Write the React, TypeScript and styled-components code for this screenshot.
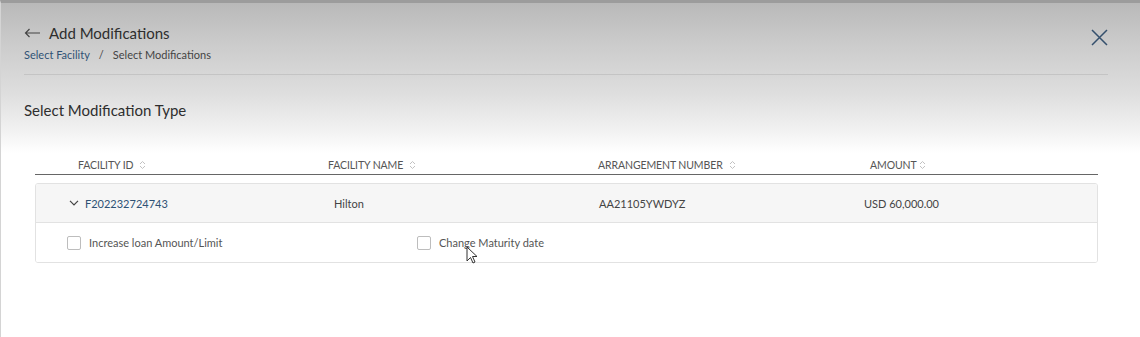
import React from "react";
import styled, { createGlobalStyle } from "styled-components";

const GlobalStyle = createGlobalStyle`
    html, body {
        margin: 0;
        padding: 0;
        background: #ffffff;
    }
    body {
        font-family: Lato, "Open Sans", "Liberation Sans", sans-serif;
        color: #333;
    }
`;

const Page = styled.div`
    position: relative;
    width: 1140px;
    height: 337px;
    box-sizing: border-box;
    border-top: 3px solid #9c9c9c;
    border-left: 1px solid #d4d4d4;
    background: linear-gradient(#b9b9b9 0px, #cbcbcb 40px, #dedede 90px, #f0f0f0 125px, #ffffff 150px);
    overflow: hidden;
`;

const Header = styled.div`
    padding: 20px 32px 0 23px;
    display: flex;
    justify-content: space-between;
    align-items: flex-start;
`;

const TitleBlock = styled.div`
    display: flex;
    flex-direction: column;
`;

const TitleRow = styled.div`
    display: flex;
    align-items: center;
    gap: 8px;
    height: 20px;
`;

const Title = styled.h1`
    margin: 0;
    font-size: 15px;
    font-weight: 400;
    color: #2e2e2e;
`;

const Crumbs = styled.div`
    display: flex;
    align-items: center;
    gap: 9px;
    margin-top: 5px;
    font-size: 11px;
    color: #444;
`;

const CrumbLink = styled.a`
    color: #2f5275;
    text-decoration: none;
`;

const CloseButton = styled.button`
    margin-top: 6px;
    border: none;
    background: none;
    padding: 0;
    width: 17px;
    height: 17px;
    cursor: pointer;
`;

const Divider = styled.hr`
    margin: 13px 32px 0 23px;
    border: none;
    border-top: 1px solid #c4c4c4;
`;

const SectionTitle = styled.h2`
    margin: 26px 0 0 23px;
    font-size: 15px;
    font-weight: 400;
    color: #2e2e2e;
`;

const Table = styled.div`
    margin: 40px 42px 0 34px;
`;

const HeadRow = styled.div`
    display: grid;
    grid-template-columns: 293px 270px 272px 1fr;
    height: 15px;
    align-items: start;
    border-bottom: 1px solid #666;
`;

const HeadCell = styled.div<{ $pad?: number; $tight?: boolean }>`
    padding-left: ${(p) => p.$pad ?? 0}px;
    display: flex;
    align-items: center;
    gap: ${(p) => (p.$tight ? 2 : 6)}px;
    font-size: 10.5px;
    color: #555;
    text-transform: uppercase;
    letter-spacing: -0.1px;
`;

const Card = styled.div`
    margin-top: 8px;
    border: 1px solid #e2e2e2;
    border-radius: 3px;
    overflow: hidden;
`;

const DataRow = styled.div`
    display: grid;
    grid-template-columns: 298px 265px 265px 1fr;
    align-items: center;
    height: 38px;
    background: #f6f6f6;
    border-bottom: 1px solid #e2e2e2;
    font-size: 11px;
    color: #444;
`;

const IdCell = styled.div`
    display: flex;
    align-items: center;
    gap: 6px;
    padding-left: 33px;
`;

const IdLink = styled.a`
    color: #2f5275;
    text-decoration: none;
`;

const Options = styled.div`
    display: grid;
    grid-template-columns: 350px 1fr;
    height: 39px;
    align-items: center;
    padding-left: 31px;
    background: #fff;
`;

const Option = styled.label`
    display: flex;
    align-items: center;
    gap: 8px;
    font-size: 11px;
    color: #555;
`;

const Box = styled.span`
    width: 12px;
    height: 12px;
    border: 1px solid #bdbdbd;
    border-radius: 2px;
    background: #fff;
`;

const Cursor = styled.svg`
    position: absolute;
    left: 465px;
    top: 243px;
`;

const SortIcon = () => (
    <svg width="7" height="10" viewBox="0 0 7 10">
        <path d="M1 4 L3.5 1.5 L6 4 M1 6 L3.5 8.5 L6 6" stroke="#c2c2c2" strokeWidth="1" fill="none" />
    </svg>
);

const columns = [
    { label: "Facility ID", pad: 43 },
    { label: "Facility Name", pad: 0 },
    { label: "Arrangement Number", pad: 0 },
    { label: "Amount", pad: 0, tight: true },
];

export default function App() {
    return (
        <>
            <GlobalStyle />
            <Page>
                <Header>
                    <TitleBlock>
                        <TitleRow>
                            <svg width="17" height="10" viewBox="0 0 17 10">
                                <path d="M16 5 H1.5 M5.5 1 L1.5 5 L5.5 9" stroke="#444" strokeWidth="1.2" fill="none" />
                            </svg>
                            <Title>Add Modifications</Title>
                        </TitleRow>
                        <Crumbs>
                            <CrumbLink>Select Facility</CrumbLink>
                            <span>/</span>
                            <span>Select Modifications</span>
                        </Crumbs>
                    </TitleBlock>
                    <CloseButton aria-label="close">
                        <svg width="17" height="17" viewBox="0 0 17 17">
                            <path d="M1 1 L16 16 M16 1 L1 16" stroke="#35506d" strokeWidth="1.5" fill="none" />
                        </svg>
                    </CloseButton>
                </Header>
                <Divider />
                <SectionTitle>Select Modification Type</SectionTitle>
                <Table>
                    <HeadRow>
                        {columns.map((c) => (
                            <HeadCell key={c.label} $pad={c.pad} $tight={c.tight}>
                                {c.label}
                                <SortIcon />
                            </HeadCell>
                        ))}
                    </HeadRow>
                    <Card>
                        <DataRow>
                            <IdCell>
                                <svg width="10" height="6" viewBox="0 0 10 6">
                                    <path d="M1 0.8 L5 5 L9 0.8" stroke="#444" strokeWidth="1.2" fill="none" />
                                </svg>
                                <IdLink>F202232724743</IdLink>
                            </IdCell>
                            <div>Hilton</div>
                            <div>AA21105YWDYZ</div>
                            <div>USD 60,000.00</div>
                        </DataRow>
                        <Options>
                            <Option>
                                <Box />
                                Increase loan Amount/Limit
                            </Option>
                            <Option>
                                <Box />
                                Change Maturity date
                            </Option>
                        </Options>
                    </Card>
                </Table>
                <Cursor width="14" height="20" viewBox="0 0 14 20">
                    <path d="M1 1 L1 15 L4.5 11.5 L7 17 L9 16 L6.5 10.5 L11 10.5 Z" fill="#fff" stroke="#333" strokeWidth="1" />
                </Cursor>
            </Page>
        </>
    );
}
